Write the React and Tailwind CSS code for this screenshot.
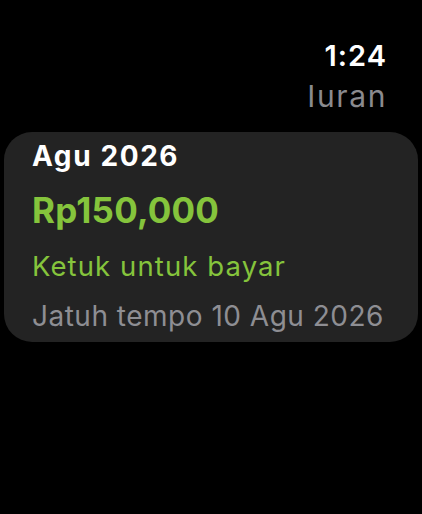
export default function App() {
  return (
    <div className="w-[422px] h-[514px] bg-black text-white overflow-hidden" style={{ fontFamily: 'Inter, "Noto Sans", sans-serif' }}>
      <div className="flex flex-col items-end pr-[35px] pt-[37px]">
        <div className="text-[29px] leading-[37px] font-semibold text-white tracking-[1px]">1:24</div>
        <div className="mt-[4px] text-[30px] leading-[36px] text-[#8a8a8e] tracking-[1.6px]">Iuran</div>
      </div>
      <div className="mx-[4px] mt-[18px] h-[210px] rounded-[28px] bg-[#232323] pl-[28px] pt-[6px]">
        <div className="text-[28px] leading-[36px] font-bold tracking-[1.6px]">Agu 2026</div>
        <div className="mt-[16px] text-[35px] leading-[40px] font-bold text-[#85c43c] tracking-[0.2px]">Rp150,000</div>
        <div className="mt-[19px] text-[27.5px] leading-[34px] text-[#85c43c] tracking-[1.1px]">Ketuk untuk bayar</div>
        <div className="mt-[16px] text-[28px] leading-[34px] text-[#8e8e93] tracking-[0.5px]">Jatuh tempo 10 Agu 2026</div>
      </div>
    </div>
  );
}
